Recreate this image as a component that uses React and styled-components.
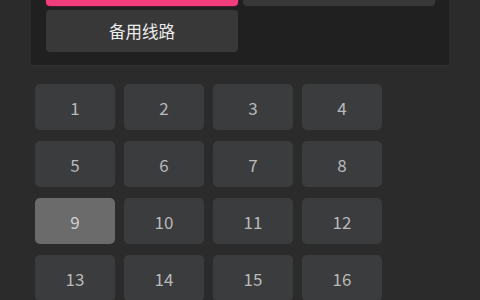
import styled, { createGlobalStyle } from 'styled-components'

const Global = createGlobalStyle`
  body {
    margin: 0;
    background: #2b2b2b;
    font-family: "Noto Sans CJK SC", "Noto Sans", sans-serif;
  }
`

const Pagina = styled.div`
  overflow: hidden;
  height: 300px;
`

// Panel de líneas, desplazado hacia arriba como en la captura.
const Panel = styled.div`
  margin: -50px 31px 0 31px;
  padding: 14px 14px 13px 15px;
  background: #202020;
  border-bottom: 1px solid #313131;
`

const Lineas = styled.div`
  display: grid;
  grid-template-columns: repeat(2, 1fr);
  gap: 4px 5px;
`

const Linea = styled.button`
  height: 42px;
  border: none;
  border-radius: 4px;
  background: ${(props) => (props.$activa ? '#f23d7c' : '#383838')};
  box-shadow: ${(props) => (props.$activa ? '0 0 0 1px #4a1a2b' : 'none')};
  color: #ececec;
  font-family: inherit;
  font-size: 16.5px;
  padding: 0;
`

const Episodios = styled.div`
  display: grid;
  grid-template-columns: repeat(4, 80px);
  gap: 11px 9px;
  margin: 18px 0 0 35px;
`

const Episodio = styled.button`
  height: 46px;
  border: none;
  border-radius: 5px;
  background: ${(props) => (props.$actual ? '#6b6b6b' : '#3b3c3e')};
  color: ${(props) => (props.$actual ? '#cfcfcf' : '#b9b9b9')};
  font-family: inherit;
  font-size: 17px;
  padding: 0;
`

const App = () => {
  const numeros = Array.from({ length: 20 }, (_, i) => i + 1)

  return (
    <Pagina>
      <Global />
      <Panel>
        <Lineas>
          <Linea $activa>线路一</Linea>
          <Linea>线路二</Linea>
          <Linea>备用线路</Linea>
        </Lineas>
      </Panel>
      <Episodios>
        {numeros.map((n) => (
          <Episodio key={n} $actual={n === 9}>
            {n}
          </Episodio>
        ))}
      </Episodios>
    </Pagina>
  )
}

export default App
